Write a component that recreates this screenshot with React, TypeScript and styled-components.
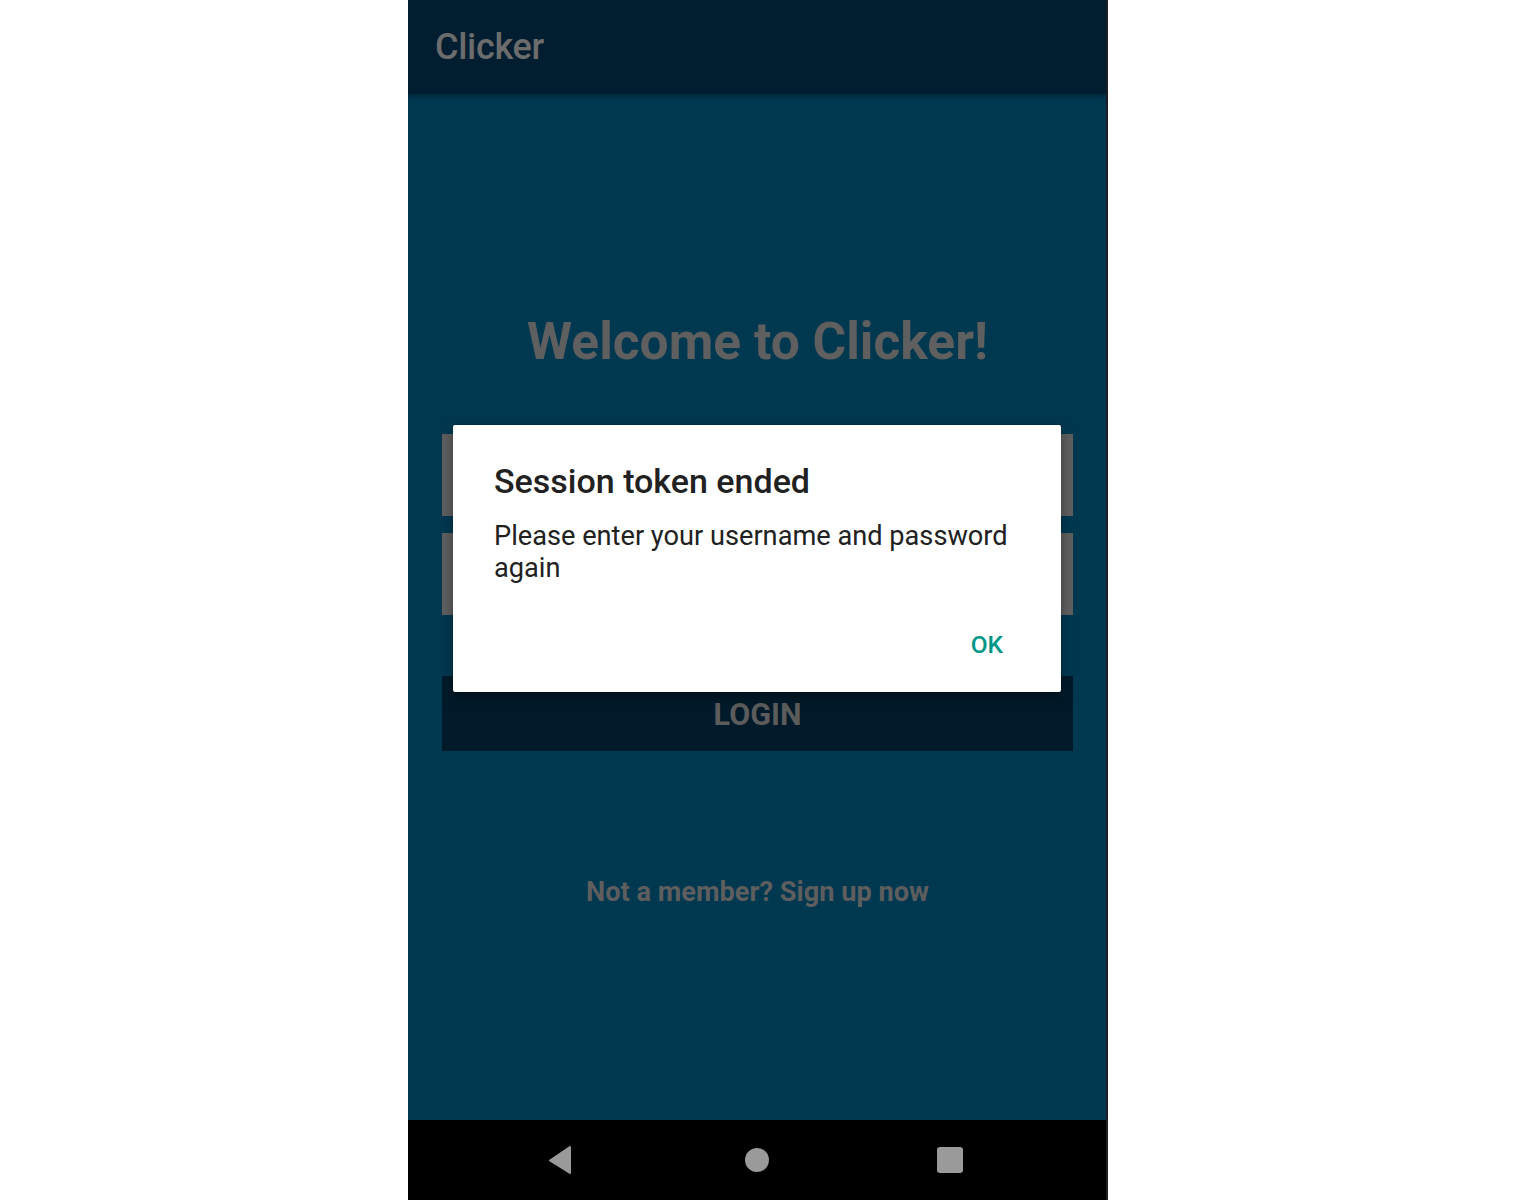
import React from "react";
import styled, { createGlobalStyle } from "styled-components";

const Global = createGlobalStyle`
  html, body { margin: 0; padding: 0; background: #ffffff; }
  body { font-family: Roboto, "Noto Sans", sans-serif; }
  * { box-sizing: border-box; }
`;

const Page = styled.div`
  width: 100%;
  display: flex;
  justify-content: flex-start;
  padding-left: 408px;
`;

const Phone = styled.div`
  position: relative;
  width: 700px;
  height: 1200px;
  display: flex;
  flex-direction: column;
  background: #003850;
  border-right: 2px solid #1c1f22;
  overflow: hidden;
`;

const AppBar = styled.header`
  height: 94px;
  flex: none;
  background: #011e30;
  display: flex;
  align-items: center;
  padding: 0 0 0 27px;
  box-shadow: 0 2px 4px rgba(0, 0, 0, 0.35);
  z-index: 1;
`;

const AppTitle = styled.h1`
  margin: 0;
  font-family: Roboto, sans-serif;
  font-weight: 500;
  font-size: 36px;
  line-height: 42px;
  color: #6c6c6c;
  letter-spacing: -0.3px;
`;

const Main = styled.main`
  flex: 1;
  display: flex;
  flex-direction: column;
  padding: 214px 33px 0 34px;
`;

const Welcome = styled.h2`
  margin: 0;
  text-align: center;
  font-family: Roboto, sans-serif;
  font-weight: 700;
  font-size: 51.5px;
  line-height: 68px;
  color: #5f5f5f;
`;

const Field = styled.div<{ $top: number }>`
  height: 82px;
  margin-top: ${(p) => p.$top}px;
  background: #5f5f5f;
`;

const LoginButton = styled.button`
  margin-top: 61px;
  height: 75px;
  border: none;
  background: #011a29;
  font-family: Roboto, sans-serif;
  font-weight: 700;
  font-size: 30.5px;
  color: #5c5c5c;
  display: flex;
  align-items: center;
  justify-content: center;
  padding: 2px 0 0;
`;

const SignUp = styled.p`
  margin: 125px 0 0;
  text-align: center;
  font-family: Roboto, sans-serif;
  font-weight: 700;
  font-size: 27.2px;
  line-height: 32px;
  color: #5e5e5e;
`;

const NavBar = styled.nav`
  height: 80px;
  flex: none;
  background: #000000;
  display: flex;
  align-items: center;
  justify-content: center;
`;

const NavSlot = styled.div<{ $shift?: number }>`
  width: 193px;
  display: flex;
  justify-content: center;
  align-items: center;
  padding-right: ${(p) => p.$shift ?? 0}px;
`;

const Dialog = styled.div`
  position: absolute;
  left: 45px;
  top: 425px;
  width: 608px;
  height: 267px;
  background: #ffffff;
  border-radius: 2px;
  box-shadow: 0 4px 12px rgba(0, 0, 0, 0.4);
  padding: 36px 58px 0 41px;
  display: flex;
  flex-direction: column;
`;

const DialogTitle = styled.h3`
  margin: 0;
  font-family: Roboto, sans-serif;
  font-weight: 500;
  font-size: 34px;
  line-height: 40px;
  color: #212121;
`;

const DialogBody = styled.p`
  margin: 19px -20px 0 0;
  font-family: Roboto, sans-serif;
  font-weight: 400;
  font-size: 27.2px;
  line-height: 32px;
  color: #212121;
`;

const Actions = styled.div`
  margin-top: auto;
  height: 62px;
  display: flex;
  justify-content: flex-end;
  align-items: flex-start;
`;

const OkButton = styled.button`
  border: none;
  background: transparent;
  padding: 0;
  font-family: Roboto, sans-serif;
  font-weight: 500;
  font-size: 24.5px;
  line-height: 30px;
  color: #009688;
`;

export default function App() {
  return (
    <>
      <Global />
      <Page>
        <Phone>
          <AppBar>
            <AppTitle>Clicker</AppTitle>
          </AppBar>
          <Main>
            <Welcome>Welcome to Clicker!</Welcome>
            <Field $top={58} />
            <Field $top={17} />
            <LoginButton>LOGIN</LoginButton>
            <SignUp>Not a member? Sign up now</SignUp>
          </Main>
          <NavBar>
            <NavSlot $shift={8}>
              <svg width="26" height="30" viewBox="0 0 26 30">
                <path d="M23 2 L23 28 L3 15.5 Z" fill="#9a9a9a" stroke="#9a9a9a" strokeWidth="2" strokeLinejoin="round" />
              </svg>
            </NavSlot>
            <NavSlot>
              <svg width="26" height="26" viewBox="0 0 26 26">
                <circle cx="13" cy="13" r="12" fill="#9a9a9a" />
              </svg>
            </NavSlot>
            <NavSlot>
              <svg width="26" height="26" viewBox="0 0 26 26">
                <rect x="0" y="0" width="26" height="26" rx="3" fill="#9a9a9a" />
              </svg>
            </NavSlot>
          </NavBar>
          <Dialog>
            <DialogTitle>Session token ended</DialogTitle>
            <DialogBody>Please enter your username and password again</DialogBody>
            <Actions>
              <OkButton>OK</OkButton>
            </Actions>
          </Dialog>
        </Phone>
      </Page>
    </>
  );
}
